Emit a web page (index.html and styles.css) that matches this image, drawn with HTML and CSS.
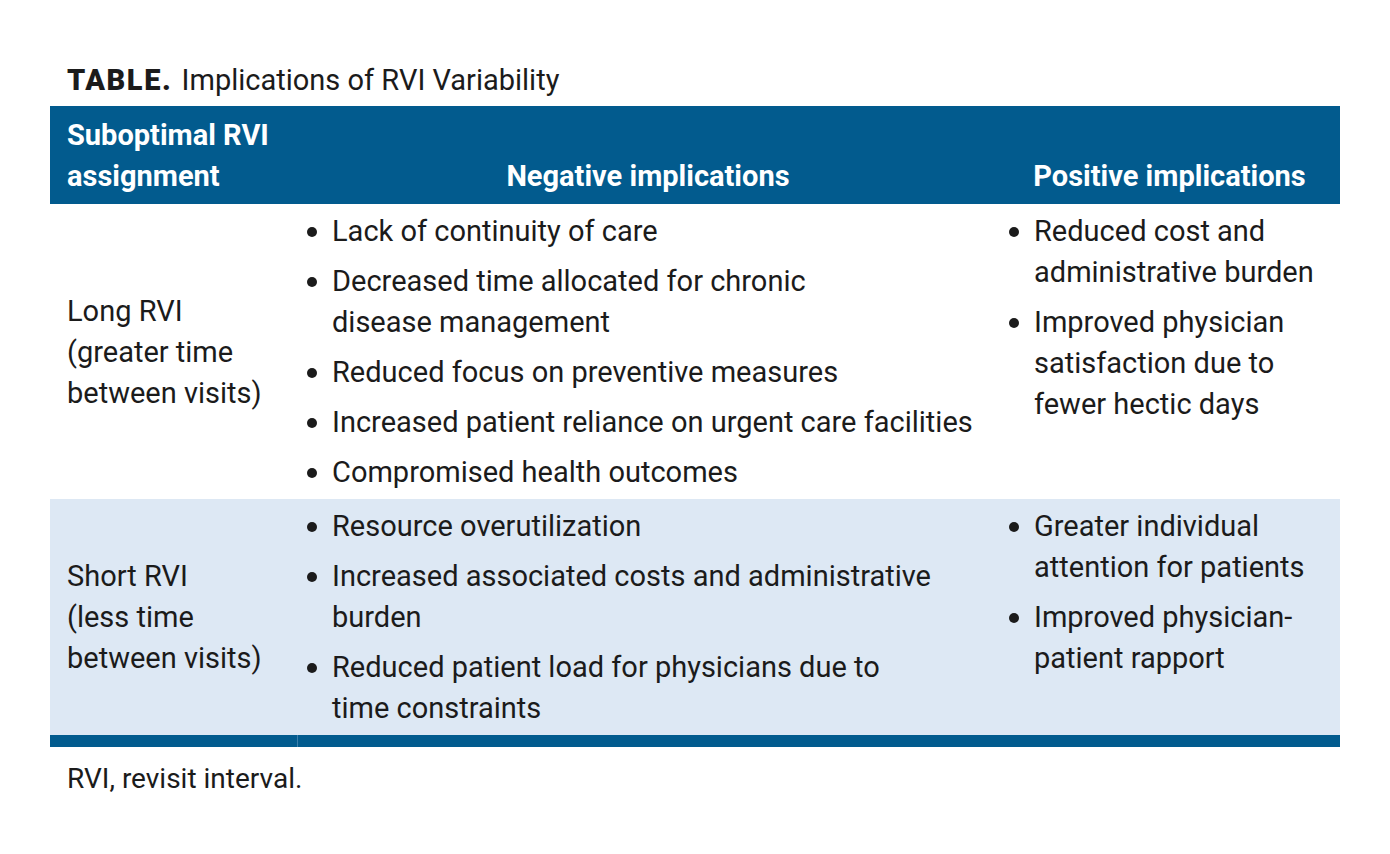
FILE: index.html
```html
<!DOCTYPE html>
<html>
<head>
<meta charset="utf-8">
<link rel="stylesheet" href="styles.css">
</head>
<body>
<div class="page">
  <h1 class="title"><span class="label">TABLE.</span> Implications of RVI Variability</h1>
  <div class="table">
    <div class="th c1">Suboptimal RVI<br>assignment</div>
    <div class="th c2">Negative implications</div>
    <div class="th c3">Positive implications</div>

    <div class="td c1 mid">Long RVI<br>(greater time<br>between visits)</div>
    <div class="td c2">
      <ul>
        <li>Lack of continuity of care</li>
        <li>Decreased time allocated for chronic<br>disease management</li>
        <li>Reduced focus on preventive measures</li>
        <li>Increased patient reliance on urgent care facilities</li>
        <li>Compromised health outcomes</li>
      </ul>
    </div>
    <div class="td c3">
      <ul>
        <li>Reduced cost and<br>administrative burden</li>
        <li>Improved physician<br>satisfaction due to<br>fewer hectic days</li>
      </ul>
    </div>

    <div class="td c1 mid alt">Short RVI<br>(less time<br>between visits)</div>
    <div class="td c2 alt">
      <ul>
        <li>Resource overutilization</li>
        <li>Increased associated costs and administrative<br>burden</li>
        <li>Reduced patient load for physicians due to<br>time constraints</li>
      </ul>
    </div>
    <div class="td c3 alt">
      <ul>
        <li>Greater individual<br>attention for patients</li>
        <li>Improved physician-<br>patient rapport</li>
      </ul>
    </div>

    <div class="foot c1"></div>
    <div class="foot c2 wide"></div>
  </div>
  <p class="note">RVI, revisit interval.</p>
</div>
</body>
</html>
```
FILE: styles.css
```css
html, body {
  margin: 0;
  padding: 0;
  background: #ffffff;
}
body {
  font-family: Roboto, "Liberation Sans", sans-serif;
  color: #1b1b1b;
}
.page {
  padding: 62px 50px 0 50px;
}
.title {
  margin: 0 0 8px 17px;
  font-size: 29px;
  font-weight: 400;
  line-height: 36px;
  color: #1b1b1b;
}
.label {
  font-weight: 900;
  letter-spacing: 1.6px;
  margin-right: 2px;
}
.table {
  display: grid;
  grid-template-columns: 247px 702px 341px;
}
.th {
  background: #025b8e;
  color: #ffffff;
  font-weight: 700;
  font-size: 29px;
  line-height: 41px;
  min-height: 97px;
  box-sizing: border-box;
  padding: 9px 0 7px 0;
  display: flex;
  flex-direction: column;
  justify-content: flex-end;
}
.th.c1 {
  padding-left: 17px;
  display: block;
}
.th.c2, .th.c3 {
  text-align: center;
}
.td {
  font-size: 29px;
  line-height: 41px;
  padding: 7px 0 6px 0;
}
.td.c1 {
  padding-left: 17px;
}
.td.mid {
  display: flex;
  align-items: center;
}
.alt {
  background: #dde8f4;
}
ul {
  list-style: none;
  margin: 0;
  padding: 0 0 0 10px;
}
li {
  position: relative;
  padding-left: 25px;
  margin-bottom: 9px;
}
li:last-child {
  margin-bottom: 0;
}
li::before {
  content: "";
  position: absolute;
  left: 0;
  top: 16px;
  width: 10px;
  height: 10px;
  border-radius: 50%;
  background: #1b1b1b;
}
.foot {
  height: 12px;
  background: #025b8e;
}
.foot.wide {
  grid-column: 2 / 4;
  border-left: 1px solid #3b7fab;
}
.note {
  margin: 17px 0 0 17px;
  font-size: 28px;
  line-height: 30px;
  color: #1b1b1b;
}
```
